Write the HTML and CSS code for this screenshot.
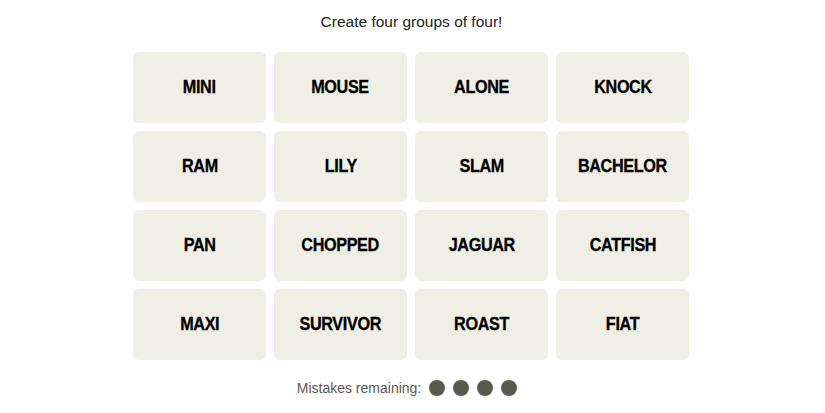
FILE: index.html
```html
<!DOCTYPE html>
<html>
<head>
<meta charset="utf-8">
<link rel="stylesheet" href="styles.css">
</head>
<body>
<main class="game">
  <p class="prompt">Create four groups of four!</p>
  <div class="board">
    <div class="tile"><span class="word">MINI</span></div>
    <div class="tile"><span class="word">MOUSE</span></div>
    <div class="tile"><span class="word">ALONE</span></div>
    <div class="tile"><span class="word">KNOCK</span></div>
    <div class="tile"><span class="word">RAM</span></div>
    <div class="tile"><span class="word">LILY</span></div>
    <div class="tile"><span class="word">SLAM</span></div>
    <div class="tile"><span class="word">BACHELOR</span></div>
    <div class="tile"><span class="word">PAN</span></div>
    <div class="tile"><span class="word">CHOPPED</span></div>
    <div class="tile"><span class="word">JAGUAR</span></div>
    <div class="tile"><span class="word">CATFISH</span></div>
    <div class="tile"><span class="word">MAXI</span></div>
    <div class="tile"><span class="word">SURVIVOR</span></div>
    <div class="tile"><span class="word">ROAST</span></div>
    <div class="tile"><span class="word">FIAT</span></div>
  </div>
  <div class="mistakes">
    <span class="mistakes-label">Mistakes remaining:</span>
    <span class="dots">
      <span class="dot"></span><span class="dot"></span><span class="dot"></span><span class="dot"></span>
    </span>
  </div>
</main>
</body>
</html>
```
FILE: styles.css
```css
html, body {
  margin: 0;
  padding: 0;
  background: #ffffff;
}
.game {
  width: 825px;
  display: flex;
  flex-direction: column;
  align-items: center;
  font-family: "Liberation Sans", Arial, sans-serif;
}
.prompt {
  margin: 12px 2px 0 0;
  height: 20px;
  line-height: 20px;
  font-size: 15.5px;
  color: #222222;
}
.board {
  margin-top: 20px;
  margin-right: 3px;
  display: grid;
  grid-template-columns: repeat(4, 133px);
  grid-auto-rows: 71px;
  gap: 8px;
}
.tile {
  background: #efefe6;
  border-radius: 6px;
  display: flex;
  align-items: center;
  justify-content: center;
  font-weight: bold;
  font-size: 18px;
  color: #000000;
}
.word {
  display: inline-block;
  letter-spacing: -0.4px;
  transform: scaleX(0.9);
  -webkit-text-stroke: 0.3px #000000;
}
.mistakes {
  margin-top: 18px;
  margin-right: 11px;
  display: flex;
  align-items: center;
  gap: 8px;
}
.mistakes-label {
  font-size: 14px;
  color: #5a594e;
  line-height: 20px;
}
.dots {
  display: flex;
  gap: 8px;
}
.dot {
  width: 16px;
  height: 16px;
  border-radius: 50%;
  background: #5a594e;
}
```
